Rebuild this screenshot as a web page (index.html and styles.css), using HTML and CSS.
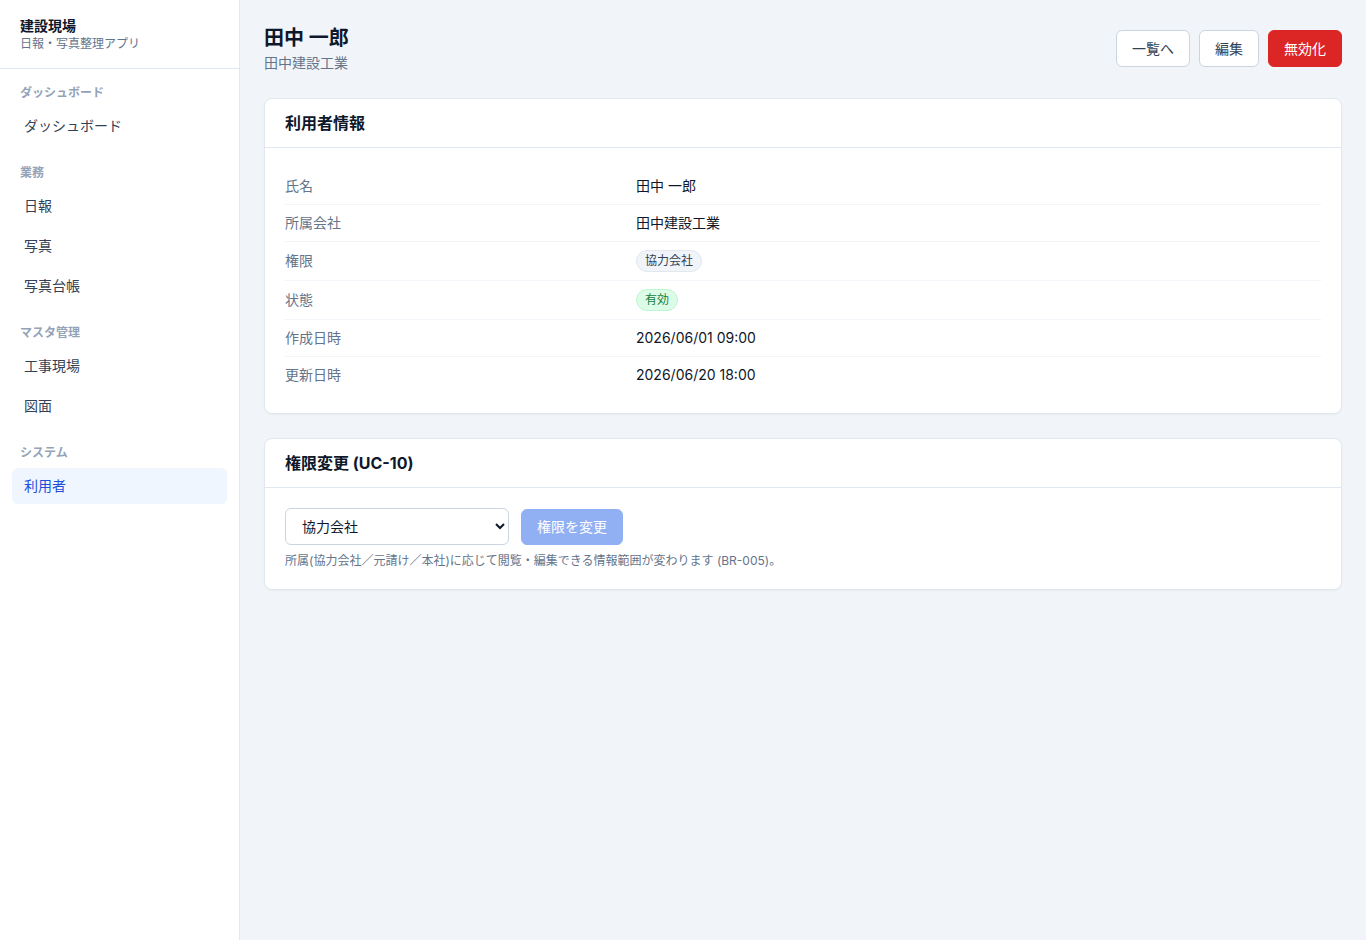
FILE: index.html
```html
<!DOCTYPE html>
<html lang="ja">
<head>
    <meta charset="UTF-8">
    <meta name="viewport" content="width=device-width, initial-scale=1.0">
    <title>利用者詳細 - 建設現場</title>
    <link rel="stylesheet" href="styles.css">
</head>
<body>
<div class="layout">
    <aside class="sidebar">
        <div class="brand">
            <div class="brand-name">建設現場</div>
            <div class="brand-sub">日報・写真整理アプリ</div>
        </div>
        <nav class="nav">
            <div class="nav-section">
                <div class="nav-label">ダッシュボード</div>
                <a class="nav-item" href="#">ダッシュボード</a>
            </div>
            <div class="nav-section">
                <div class="nav-label">業務</div>
                <a class="nav-item" href="#">日報</a>
                <a class="nav-item" href="#">写真</a>
                <a class="nav-item" href="#">写真台帳</a>
            </div>
            <div class="nav-section">
                <div class="nav-label">マスタ管理</div>
                <a class="nav-item" href="#">工事現場</a>
                <a class="nav-item" href="#">図面</a>
            </div>
            <div class="nav-section">
                <div class="nav-label">システム</div>
                <a class="nav-item active" href="#">利用者</a>
            </div>
        </nav>
    </aside>

    <main class="main">
        <div class="page-header">
            <div>
                <h1 class="page-title">田中 一郎</h1>
                <div class="page-sub">田中建設工業</div>
            </div>
            <div class="actions">
                <button class="btn">一覧へ</button>
                <button class="btn">編集</button>
                <button class="btn btn-danger">無効化</button>
            </div>
        </div>

        <section class="card">
            <div class="card-header">利用者情報</div>
            <div class="card-body">
                <dl class="detail">
                    <div class="detail-row">
                        <dt>氏名</dt>
                        <dd>田中 一郎</dd>
                    </div>
                    <div class="detail-row">
                        <dt>所属会社</dt>
                        <dd>田中建設工業</dd>
                    </div>
                    <div class="detail-row">
                        <dt>権限</dt>
                        <dd><span class="badge">協力会社</span></dd>
                    </div>
                    <div class="detail-row">
                        <dt>状態</dt>
                        <dd><span class="badge badge-green">有効</span></dd>
                    </div>
                    <div class="detail-row">
                        <dt>作成日時</dt>
                        <dd>2026/06/01 09:00</dd>
                    </div>
                    <div class="detail-row">
                        <dt>更新日時</dt>
                        <dd>2026/06/20 18:00</dd>
                    </div>
                </dl>
            </div>
        </section>

        <section class="card">
            <div class="card-header">権限変更 (UC-10)</div>
            <div class="card-body">
                <form class="role-form">
                    <select class="select" name="role">
                        <option selected>協力会社</option>
                        <option>元請け</option>
                        <option>本社</option>
                    </select>
                    <button type="button" class="btn btn-primary" disabled>権限を変更</button>
                </form>
                <p class="hint">所属(協力会社／元請け／本社)に応じて閲覧・編集できる情報範囲が変わります (BR-005)。</p>
            </div>
        </section>
    </main>
</div>
</body>
</html>
```

FILE: styles.css
```css
* {
    box-sizing: border-box;
}
body {
    margin: 0;
    font-family: Inter, "Noto Sans CJK JP", sans-serif;
    font-size: 14px;
    line-height: 20px;
    color: #0f172a;
    background: #f1f5f9;
}
.layout {
    display: flex;
    min-height: 940px;
}

/* sidebar */
.sidebar {
    width: 240px;
    flex-shrink: 0;
    background: #fff;
    border-right: 1px solid #e2e8f0;
}
.brand {
    padding: 16px 20px 16px;
    border-bottom: 1px solid #e2e8f0;
}
.brand-name {
    font-weight: 700;
    font-size: 14px;
    line-height: 20px;
}
.brand-sub {
    font-size: 12px;
    line-height: 16px;
    color: #64748b;
}
.nav {
    padding: 0 12px;
}
.nav-section {
    display: flex;
    flex-direction: column;
    gap: 4px;
    margin-top: 21px;
}
.nav-section:first-child {
    margin-top: 16px;
}
.nav-label {
    padding: 0 8px;
    font-size: 12px;
    line-height: 16px;
    font-weight: 700;
    color: #94a3b8;
    margin-bottom: 3px;
}
.nav-item {
    display: block;
    height: 36px;
    line-height: 36px;
    padding: 0 12px;
    border-radius: 6px;
    color: #334155;
    text-decoration: none;
}
.nav-item.active {
    background: #eff6ff;
    color: #1d4ed8;
}

/* main */
.main {
    flex: 1;
    padding: 24px;
}
.page-header {
    display: flex;
    justify-content: space-between;
    align-items: center;
    margin-bottom: 25px;
}
.page-title {
    margin: 0;
    font-size: 20px;
    line-height: 28px;
    font-weight: 700;
}
.page-sub {
    color: #64748b;
    margin-top: 1px;
}
.actions {
    display: flex;
    gap: 9px;
}
.btn {
    height: 37px;
    padding: 0 15px;
    border: 1px solid #cbd5e1;
    border-radius: 6px;
    background: #fff;
    color: #334155;
    font: inherit;
    cursor: pointer;
}
.btn-danger {
    background: #dc2626;
    border-color: #dc2626;
    color: #fff;
}
.btn-primary {
    background: #2563eb;
    border-color: #2563eb;
    color: #fff;
    height: 36px;
}
.btn-primary:disabled {
    opacity: 0.5;
    cursor: default;
}

/* cards */
.card {
    background: #fff;
    border: 1px solid #e2e8f0;
    border-radius: 8px;
    box-shadow: 0 1px 2px rgba(15, 23, 42, 0.04);
    margin-bottom: 24px;
}
.card-header {
    padding: 14px 20px;
    border-bottom: 1px solid #e2e8f0;
    font-size: 16px;
    font-weight: 700;
}
.card-body {
    padding: 20px;
}

/* detail list */
.detail {
    margin: 0;
}
.detail-row {
    display: grid;
    grid-template-columns: 351px 1fr;
    align-items: center;
    padding: 8px 0;
    border-bottom: 1px solid #f1f5f9;
}
.detail-row:last-child {
    border-bottom: none;
}
.detail dt {
    color: #64748b;
}
.detail dd {
    margin: 0;
}
.badge {
    display: inline-block;
    padding: 2px 8px;
    font-size: 12px;
    line-height: 16px;
    border-radius: 999px;
    background: #f1f5f9;
    border: 1px solid #e2e8f0;
    color: #334155;
    vertical-align: middle;
}
.badge-green {
    background: #dcfce7;
    border-color: #bbf7d0;
    color: #15803d;
}

/* role form */
.role-form {
    display: flex;
    align-items: center;
    gap: 12px;
}
.select {
    width: 224px;
    height: 37px;
    padding: 0 8px 0 12px;
    border: 1px solid #cbd5e1;
    border-radius: 6px;
    background: #fff;
    font: inherit;
    color: #0f172a;
}
.hint {
    margin: 8px 0 0;
    font-size: 12px;
    line-height: 16px;
    color: #64748b;
}
```
